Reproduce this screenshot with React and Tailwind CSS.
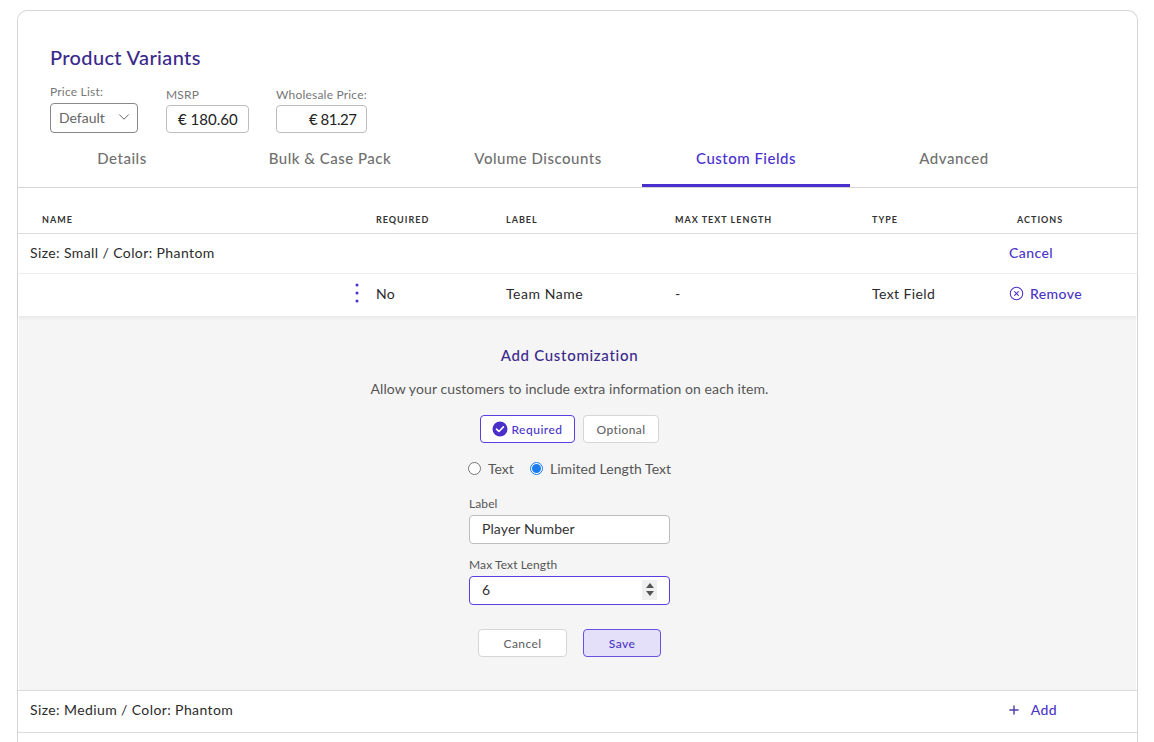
import React from 'react';
import { ChevronDown, CircleX, Plus } from 'lucide-react';

const tabs = ['Details', 'Bulk & Case Pack', 'Volume Discounts', 'Custom Fields', 'Advanced'];
const columns = 'grid grid-cols-[358px_130px_169px_197px_137px_1fr]';

function PriceBox({ label, value, width, align }) {
  return (
    <div className="flex flex-col">
      <span className="text-[12px] leading-[15px] tracking-[0.2px] text-[#777]">{label}</span>
      <div className={`mt-[3px] flex h-[28px] items-center rounded-[4px] border border-[#bdbdbd] text-[15px] text-[#222] ${width} ${align}`}>
        {value}
      </div>
    </div>
  );
}

function Radio({ checked, label }) {
  return (
    <div className="flex items-center gap-[7px]">
      {checked ? (
        <span className="flex h-[13px] w-[13px] items-center justify-center rounded-full border border-[#1a7cf0] bg-white">
          <span className="h-[9px] w-[9px] rounded-full bg-[#1a7cf0]" />
        </span>
      ) : (
        <span className="h-[13px] w-[13px] rounded-full border border-[#767676] bg-white" />
      )}
      <span className="text-[14px] tracking-[0.05px] text-[#555]">{label}</span>
    </div>
  );
}

export default function App() {
  return (
    <div className="h-[742px] overflow-hidden bg-white pl-[17px] pr-[16px] pt-[10px] font-['Lato',sans-serif]">
      <div className="rounded-t-[10px] border border-b-0 border-[#d6d6d6]">
        <div className="pl-[32px] pt-[33px]">
          <h1 className="text-[20px] font-medium leading-[26px] tracking-[0.35px] text-[#3b2a8c]">Product Variants</h1>
          <div className="mt-[14px] flex items-end">
            <div className="flex w-[116px] flex-col">
              <span className="text-[12px] leading-[15px] tracking-[0.2px] text-[#777]">Price List:</span>
              <div className="mt-[4px] flex h-[30px] w-[88px] items-center justify-between rounded-[4px] border border-[#888] pb-[2px] pl-[8px] pr-[4px] text-[14px] text-[#666]">
                Default
                <ChevronDown size={18} strokeWidth={1.2} className="text-[#555]" />
              </div>
            </div>
            <div className="w-[110px]">
              <PriceBox label="MSRP" value="€ 180.60" width="w-[83px]" align="pl-[11px]" />
            </div>
            <PriceBox label="Wholesale Price:" value="€ 81.27" width="w-[91px] tracking-[-0.5px]" align="pl-[32px]" />
          </div>
        </div>

        <div className="flex h-[55px] border-b border-[#d6d6d6]">
          {tabs.map((tab) => (
            <div
              key={tab}
              className={`flex w-[208px] items-center justify-center border-b-[3px] pb-[1px] text-[15px] font-medium tracking-[0.5px] ${
                tab === 'Custom Fields' ? 'border-[#4a2fd0] text-[#4a2fd0]' : 'border-transparent text-[#707070]'
              }`}
            >
              {tab}
            </div>
          ))}
        </div>

        <div className={`${columns} h-[46px] items-center border-b border-[#dcdcdc] pt-[18px] text-[9px] font-bold tracking-[1px] text-[#333]`}>
          <span className="pl-[24px]">NAME</span>
          <span>REQUIRED</span>
          <span>LABEL</span>
          <span>MAX TEXT LENGTH</span>
          <span>TYPE</span>
          <span className="pl-[8px]">ACTIONS</span>
        </div>

        <div className="flex h-[40px] items-center justify-between border-b border-[#eeeeee] pb-[2px] pl-[12px] pr-[84px] text-[14px] tracking-[0.4px] text-[#2b2b2b]">
          <span>Size: Small / Color: Phantom</span>
          <span className="font-medium text-[#4a35c8]">Cancel</span>
        </div>

        <div className={`${columns} relative h-[42px] items-center pb-[4px] text-[14px] tracking-[0.4px] text-[#2b2b2b] shadow-[0_2px_4px_rgba(0,0,0,0.06)]`}>
          <span className="flex justify-end pr-[17px]">
            <svg width="4" height="20" viewBox="0 0 4 20" fill="#4a2fd0">
              <circle cx="2" cy="2" r="1.5" />
              <circle cx="2" cy="10" r="1.5" />
              <circle cx="2" cy="18" r="1.5" />
            </svg>
          </span>
          <span>No</span>
          <span className="tracking-[0.55px]">Team Name</span>
          <span>-</span>
          <span>Text Field</span>
          <span className="flex items-center gap-[6px] font-medium text-[#4a35c8]">
            <CircleX size={15} strokeWidth={1.7} />
            Remove
          </span>
        </div>

        <div className="mx-[1px] flex h-[374px] flex-col items-center bg-[#f5f5f5] pr-[16px] pt-[29px]">
          <h2 className="text-[15px] font-medium leading-[20px] tracking-[0.7px] text-[#3b2a8c]">Add Customization</h2>
          <p className="mt-[14px] text-[14px] leading-[20px] tracking-[0.09px] text-[#555]">
            Allow your customers to include extra information on each item.
          </p>
          <div className="mt-[16px] flex gap-[8px]">
            <div className="flex h-[28px] w-[95px] items-center justify-center gap-[3px] rounded-[4px] border border-[#5a3fe0] bg-white pt-[1px] text-[12px] font-medium tracking-[0.5px] text-[#4a35c8]">
              <svg width="16" height="16" viewBox="0 0 16 16" className="-mt-[1px]">
                <circle cx="8" cy="8" r="7.5" fill="#4a2fc8" />
                <path d="M4.5 8.2l2.4 2.3 4.5-4.6" fill="none" stroke="#fff" strokeWidth="1.6" strokeLinecap="round" strokeLinejoin="round" />
              </svg>
              Required
            </div>
            <div className="flex h-[28px] w-[76px] items-center justify-center rounded-[4px] border border-[#d6d6d6] bg-white pt-[1px] text-[12px] font-medium tracking-[0.4px] text-[#666]">
              Optional
            </div>
          </div>
          <div className="mt-[13px] flex h-[24px] gap-[16px]">
            <Radio label="Text" />
            <Radio checked label="Limited Length Text" />
          </div>
          <div className="mt-[16px] flex w-[201px] flex-col">
            <span className="text-[12px] leading-[15px] tracking-[0.1px] text-[#555]">Label</span>
            <div className="mt-[4px] flex h-[29px] items-center rounded-[4px] border border-[#bdbdbd] bg-white pb-[2px] pl-[12px] text-[14px] tracking-[0.1px] text-[#333]">
              Player Number
            </div>
            <span className="mt-[13px] text-[12px] leading-[15px] tracking-[0.1px] text-[#555]">Max Text Length</span>
            <div className="mt-[4px] flex h-[29px] items-center justify-between rounded-[4px] border border-[#5a3fe0] bg-white pb-[2px] pl-[12px] pr-[12px] text-[14px] text-[#333]">
              6
              <span className="flex h-[20px] w-[15px] flex-col items-center justify-center gap-[3px] bg-[#f0f0f0]">
                <svg width="8" height="5" viewBox="0 0 8 5" fill="#555"><path d="M4 0l4 5H0z" /></svg>
                <svg width="8" height="5" viewBox="0 0 8 5" fill="#555"><path d="M0 0h8L4 5z" /></svg>
              </span>
            </div>
          </div>
          <div className="mt-[24px] flex gap-[16px]">
            <div className="flex h-[28px] w-[89px] items-center justify-center rounded-[4px] border border-[#d6d6d6] bg-white pt-[1px] text-[12px] font-medium tracking-[0.4px] text-[#666]">
              Cancel
            </div>
            <div className="flex h-[28px] w-[78px] items-center justify-center rounded-[4px] border border-[#6a50e0] bg-[#e4e0fa] pt-[1px] text-[12px] font-medium tracking-[0.4px] text-[#4a35c8]">
              Save
            </div>
          </div>
        </div>

        <div className="flex h-[43px] items-center justify-between border-y border-[#dcdcdc] pb-[4px] pl-[12px] pr-[80px] text-[14px] tracking-[0.4px] text-[#2b2b2b]">
          <span>Size: Medium / Color: Phantom</span>
          <span className="flex items-center gap-[10px] font-medium text-[#4a35c8]">
            <Plus size={14} strokeWidth={2.5} className="text-[#4f3fb0]" />
            Add
          </span>
        </div>
        <div className="h-[20px]" />
      </div>
    </div>
  );
}
